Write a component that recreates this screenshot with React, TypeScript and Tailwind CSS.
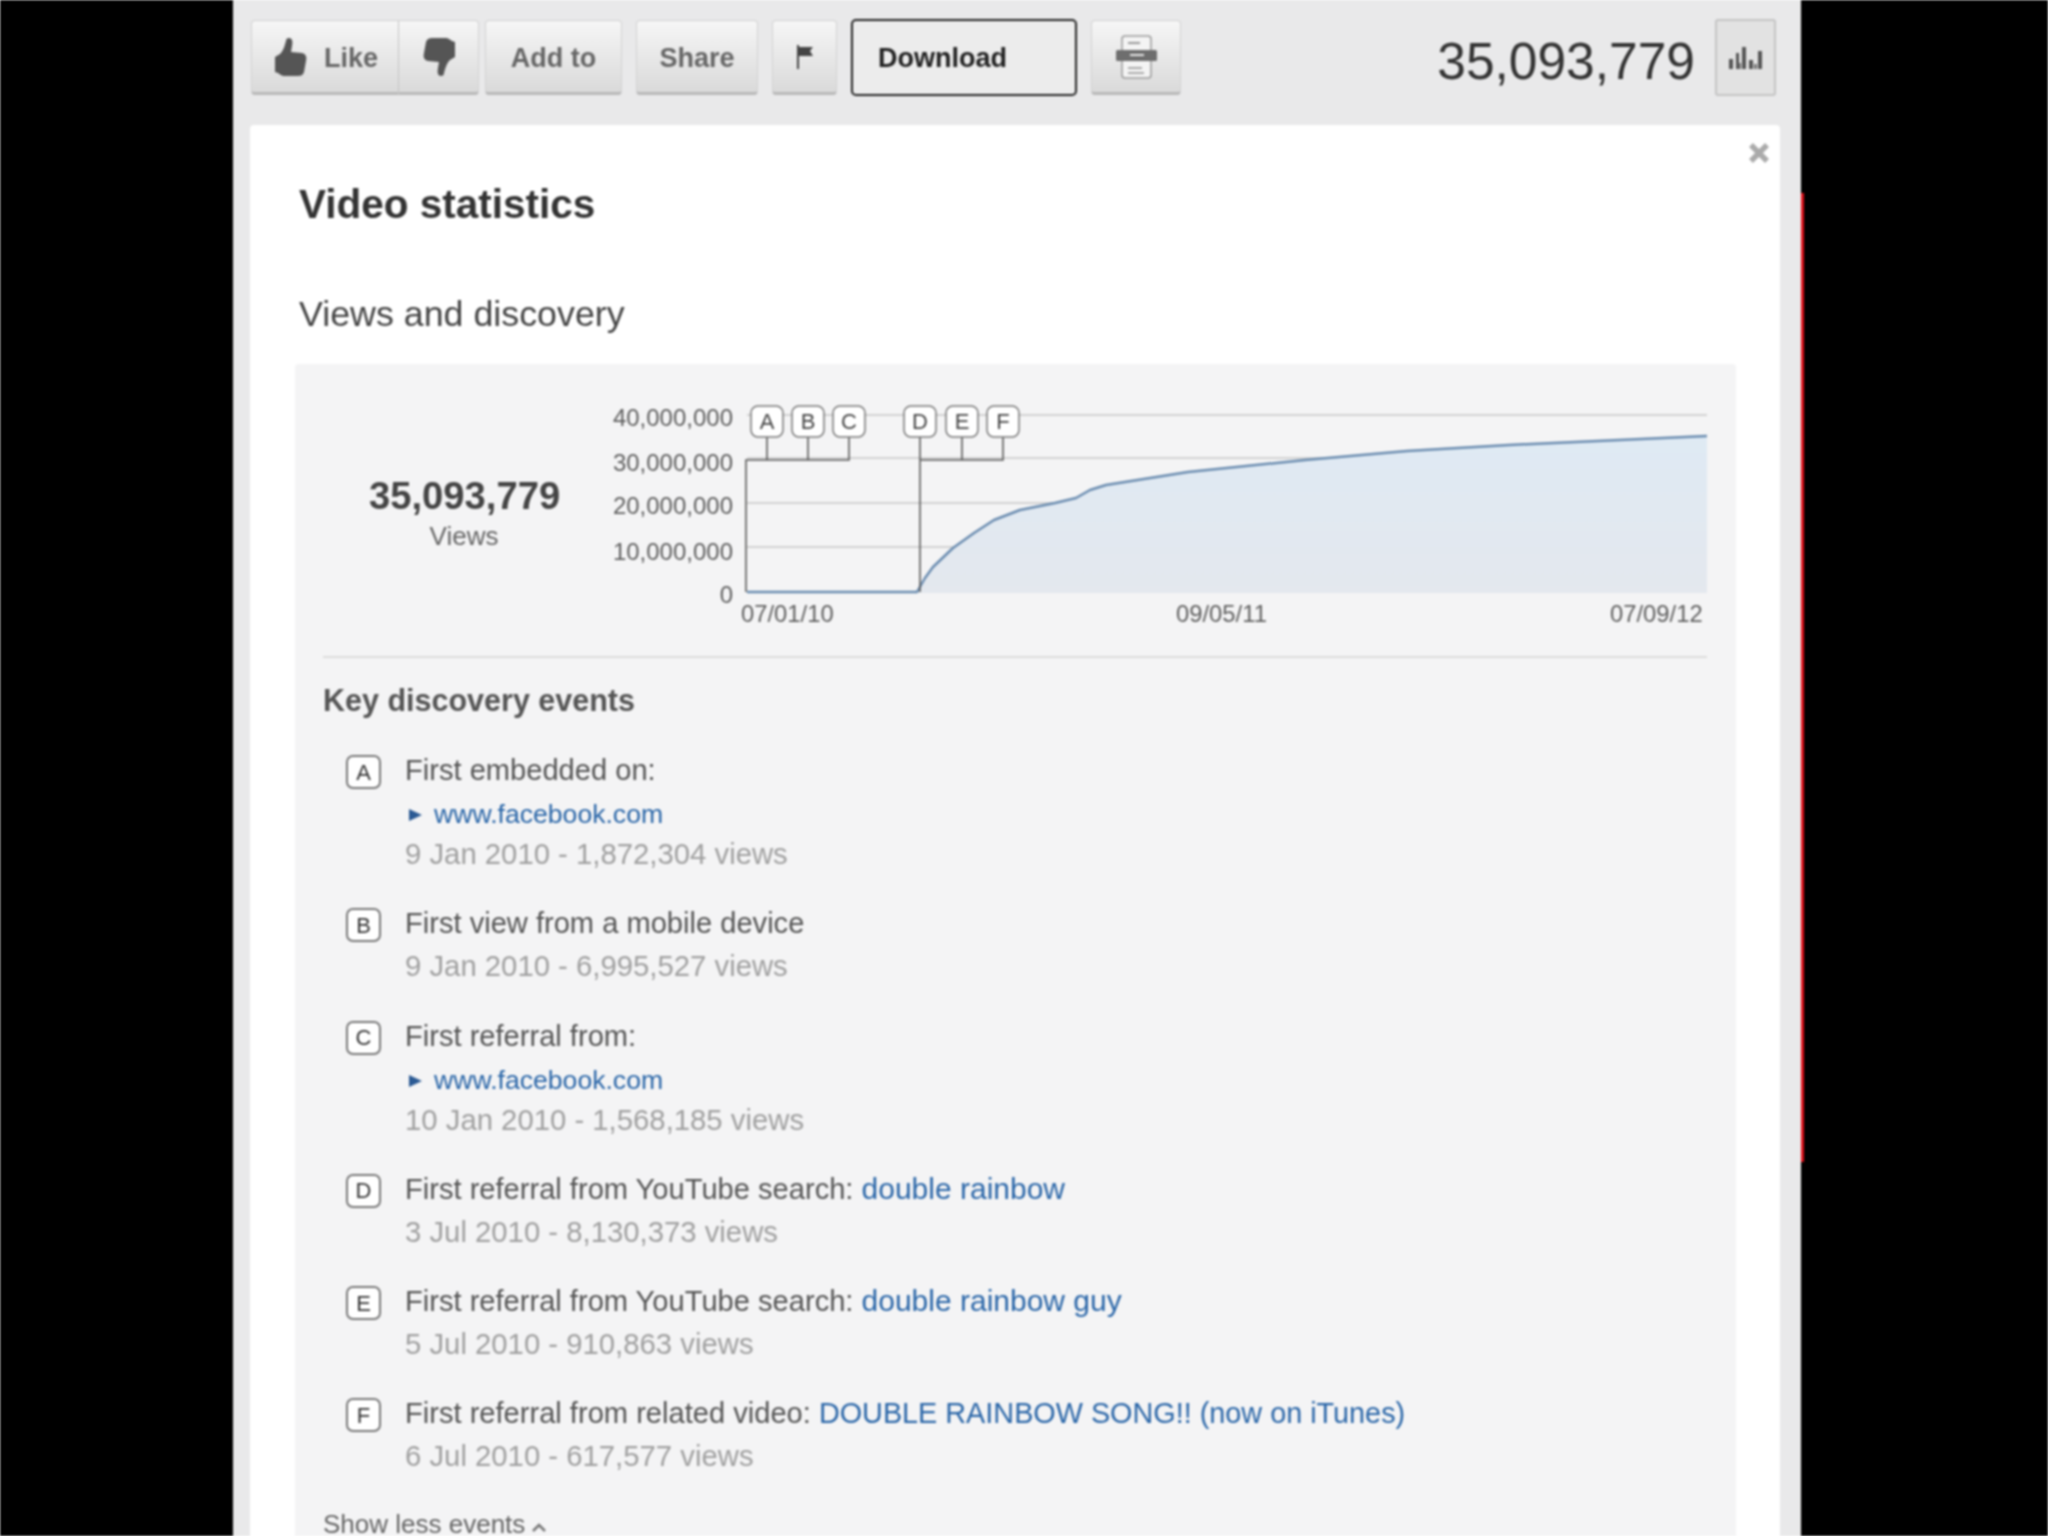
const thumb =
  "M14 0C17 0 18 3 17 8L16 14L27 15C31 16 32 19 31 23L29 34C28 37 26 38 23 38L10 38C6 38 5 36 3 35L0 34L0 19L5 16C9 12 10 6 11 3C11 1 12 0 14 0Z";

const btn =
  "h-[75px] flex items-center justify-center bg-gradient-to-b from-[#f6f6f6] to-[#dadada] border border-[#d2d2d2] border-b-[3px] border-b-[#b9b9b9] rounded-[4px] text-[27px] font-bold text-[#666666]";

function Badge({ l }: { l: string }) {
  return (
    <div className="mt-[5px] ml-[23px] mr-[24px] w-[35px] h-[34px] shrink-0 flex items-center justify-center bg-white border-2 border-[#777777] rounded-[7px] text-[22px] text-[#333333]">
      {l}
    </div>
  );
}

function Arrow() {
  return (
    <svg width="13" height="12" viewBox="0 0 13 12" className="ml-[4px] mr-[12px] shrink-0">
      <path d="M0 0L13 6L0 12Z" fill="#2b5a94" />
    </svg>
  );
}

type Ev = { l: string; title: string; a?: string; aSize?: string; link?: string; date: string };

const events: Ev[] = [
  { l: "A", title: "First embedded on:", link: "www.facebook.com", date: "9 Jan 2010 - 1,872,304 views" },
  { l: "B", title: "First view from a mobile device", date: "9 Jan 2010 - 6,995,527 views" },
  { l: "C", title: "First referral from:", link: "www.facebook.com", date: "10 Jan 2010 - 1,568,185 views" },
  { l: "D", title: "First referral from YouTube search: ", a: "double rainbow", aSize: "text-[30px]", date: "3 Jul 2010 - 8,130,373 views" },
  { l: "E", title: "First referral from YouTube search: ", a: "double rainbow guy", aSize: "text-[30px]", date: "5 Jul 2010 - 910,863 views" },
  { l: "F", title: "First referral from related video: ", a: "DOUBLE RAINBOW SONG!! (now on iTunes)", aSize: "text-[28.8px]", date: "6 Jul 2010 - 617,577 views" },
];

function Event({ e }: { e: Ev }) {
  return (
    <div className="flex mb-[29.3px]">
      <Badge l={e.l} />
      <div>
        <div className="h-[40px] leading-[40px] text-[29.1px] text-[#555555] whitespace-pre">
          {e.title}
          {e.a && <span className={e.aSize + " text-[#2a66a8]"}>{e.a}</span>}
        </div>
        {e.link && (
          <div className="mt-[5px] h-[40px] flex items-center text-[26.6px] text-[#2a66a8]">
            <Arrow />
            {e.link}
          </div>
        )}
        <div className={(e.link ? "-mt-px " : "mt-[3px] ") + "h-[40px] leading-[40px] text-[29.3px] text-[#a0a0a0]"}>{e.date}</div>
      </div>
    </div>
  );
}

const curve =
  "M747 592L917 592L925 578L933 567L953 548L974 533L994 520L1020 510L1055 503L1076 498L1090 490L1106 485L1188 472L1305 460L1407 451L1509 445L1707 436";

function Chart() {
  const mark = (l: string, x: number) => (
    <g key={l}>
      <rect x={x - 16} y={406} width={32} height={31} rx={7} fill="#ffffff" stroke="#777777" strokeWidth={1.5} />
      <text x={x} y={429} textAnchor="middle" fontSize={22} fill="#444444">
        {l}
      </text>
    </g>
  );
  const yl = (t: string, y: number) => (
    <text key={t} x={733} y={y} textAnchor="end" fontSize={24} fill="#5f5f5f">
      {t}
    </text>
  );
  const xl = (t: string, x: number) => (
    <text key={t} x={x} y={622} fontSize={23.8} fill="#5f5f5f">
      {t}
    </text>
  );
  return (
    <svg width={1120} height={240} viewBox="600 395 1120 240" className="block shrink-0">
      <defs>
        <linearGradient id="fa" x1="0" y1="0" x2="0" y2="1">
          <stop offset="0" stopColor="#dfeaf4" />
          <stop offset="1" stopColor="#e4e8ee" />
        </linearGradient>
      </defs>
      {[415, 458, 503, 547].map((y) => (
        <line key={y} x1={747} x2={1707} y1={y} y2={y} stroke="#d2d2d2" strokeWidth={2} />
      ))}
      <path d={curve + "L1707 593L747 593Z"} fill="url(#fa)" />
      <path d={curve} fill="none" stroke="#6a8cb0" strokeWidth={2.5} strokeLinejoin="round" />
      <path
        d="M746 592L746 460L849 460L849 437M767 460L767 437M808 460L808 437M920 592L920 437M920 460L1003 460L1003 437M962 460L962 437"
        fill="none"
        stroke="#5a5a5a"
        strokeWidth={1.6}
      />
      {yl("40,000,000", 426)}
      {yl("30,000,000", 471)}
      {yl("20,000,000", 514)}
      {yl("10,000,000", 560)}
      {yl("0", 603)}
      {xl("07/01/10", 741)}
      {xl("09/05/11", 1176)}
      {xl("07/09/12", 1610)}
      {mark("A", 767)}
      {mark("B", 808)}
      {mark("C", 849)}
      {mark("D", 920)}
      {mark("E", 962)}
      {mark("F", 1003)}
    </svg>
  );
}

export default function App() {
  return (
    <div className="relative w-[2048px] h-[1536px] bg-black overflow-hidden font-['Liberation_Sans',Arial,sans-serif] blur-[0.8px]">
      <div className="ml-[233px] w-[1568px] h-[1536px] bg-[#e9e9ea] overflow-hidden">
        {/* toolbar */}
        <div className="h-[125px] pt-[20px] pl-[18px] pr-[25px] flex items-start">
          <div className={btn + " w-[148px] rounded-r-none border-r-[#c4c4c4] justify-start pl-[23px]"}>
            <svg width="32" height="38" viewBox="0 0 32 38" className="mr-[17px]">
              <path d={thumb} fill="#555555" />
            </svg>
            <span className="pt-[3px]">Like</span>
          </div>
          <div className={btn + " w-[80px] rounded-l-none border-l-0"}>
            <svg width="32" height="38" viewBox="0 0 32 38" className="rotate-180">
              <path d={thumb} fill="#555555" />
            </svg>
          </div>
          <div className={btn + " ml-[6px] w-[137px] pt-[3px]"}>Add to</div>
          <div className={btn + " ml-[14px] w-[122px] pt-[3px]"}>Share</div>
          <div className={btn + " ml-[14px] w-[65px]"}>
            <svg width="18" height="24" viewBox="0 0 18 24">
              <path d="M1 0H3V2H17L14 6L17 11H3V24H1Z" fill="#444444" />
            </svg>
          </div>
          <div className="ml-[14px] -mt-px w-[226px] h-[77px] flex items-center pl-[25px] pt-[2px] bg-[#ececec] border-2 border-[#222222] rounded-[5px] text-[27px] font-bold text-[#222222]">
            Download
          </div>
          <div className={btn + " ml-[14px] w-[90px]"}>
            <svg width="41" height="44" viewBox="0 0 41 44">
              <rect x="6" y="1" width="29" height="42" rx="3" fill="#f4f4f4" stroke="#9a9a9a" strokeWidth="1.5" />
              <rect x="0" y="15" width="41" height="11" rx="1.5" fill="#6e6e6e" />
              <rect x="12" y="7" width="12" height="2" fill="#999999" />
              <rect x="14" y="19" width="14" height="2" fill="#e8e8e8" />
              <rect x="12" y="32" width="14" height="2" fill="#aaaaaa" />
              <rect x="12" y="37" width="16" height="2" fill="#aaaaaa" />
            </svg>
          </div>
          <div className="ml-auto mr-[20px] mt-[6px] h-[70px] leading-[70px] text-[51.5px] text-[#333333]">35,093,779</div>
          <div className="-mt-px w-[61px] h-[77px] flex items-center justify-center bg-[#e2e2e2] border-2 border-[#c4c4c4] rounded-[3px]">
            <svg width="33" height="22" viewBox="0 0 33 22">
              <path d="M0 12H4V22H0ZM7 6H10V22H7ZM13 0H17V22H13ZM20 13H24V22H20ZM29 4H33V22H29Z" fill="#555555" />
              <path d="M25 17H28V22H25ZM10 16H12V22H10Z" fill="#777777" />
            </svg>
          </div>
        </div>

        {/* card */}
        <div className="relative ml-[17px] w-[1530px] bg-white rounded-t-[4px] h-[1411px]">
          <svg width="22" height="22" viewBox="0 0 22 22" className="absolute right-[10px] top-[17px]">
            <path d="M3 3L19 19M19 3L3 19" stroke="#aaaaaa" strokeWidth="5.5" />
          </svg>
          <h1 className="ml-[49px] pt-[56px] h-[96px] leading-[46px] text-[40.5px] font-bold text-[#333333]">Video statistics</h1>
          <h2 className="ml-[49px] mt-[70px] h-[46px] leading-[46px] text-[35.8px] text-[#444444]">Views and discovery</h2>
          <div className="ml-[45px] mt-[27px] w-[1441px] h-[1300px] bg-[#f4f4f5] rounded-t-[4px] pt-[31px]">
            <div className="flex h-[240px]">
              <div className="ml-[74px] mr-[41px] w-[190px] shrink-0 pt-[79px] text-center">
                <div className="h-[44px] leading-[44px] text-[38.2px] font-bold text-[#444444] whitespace-nowrap">35,093,779</div>
                <div className="h-[36px] leading-[36px] text-[26px] text-[#666666]">Views</div>
              </div>
              <Chart />
            </div>
            <div className="ml-[28px] mt-[21px] w-[1384px] h-[2px] bg-[#dcdcdc]" />
            <div className="ml-[28px] mt-[22px]">
              <div className="h-[40px] leading-[40px] text-[30.5px] font-bold text-[#555555]">Key discovery events</div>
              <div className="mt-[30px]">
                {events.map((e) => (
                  <Event key={e.l} e={e} />
                ))}
              </div>
              <div className="-mt-px h-[40px] flex items-center text-[26px] text-[#666666]">
                Show less events
                <svg width="14" height="9" viewBox="0 0 14 9" className="ml-[7px] mt-[6px]">
                  <path d="M1 8L7 2L13 8" fill="none" stroke="#777777" strokeWidth="2.5" />
                </svg>
              </div>
            </div>
          </div>
        </div>
      </div>
      {/* red edge of the page behind */}
      <div className="absolute left-[1801px] top-[193px] w-[3px] h-[969px] bg-[#e0101a]" />
    </div>
  );
}
